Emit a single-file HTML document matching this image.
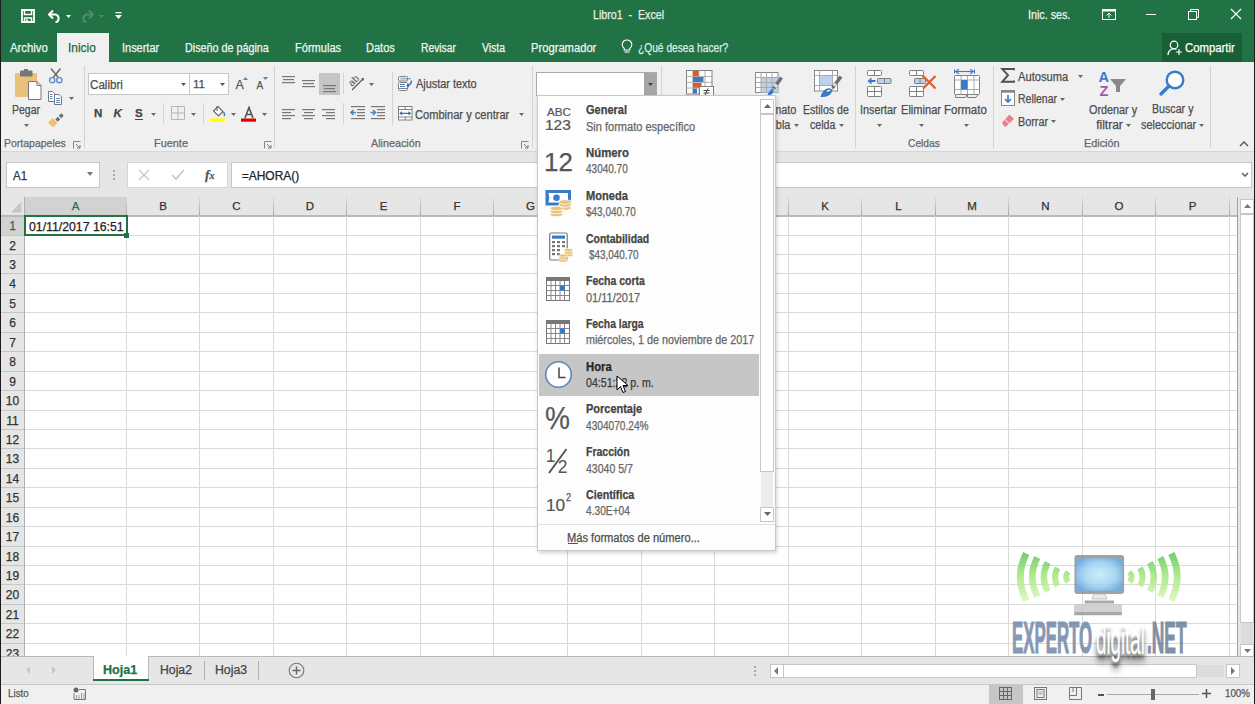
<!DOCTYPE html><html><head><meta charset="utf-8"><style>
*{margin:0;padding:0;box-sizing:border-box}
html,body{width:1255px;height:704px;overflow:hidden;position:relative;font-family:"Liberation Sans",sans-serif}
.r{position:absolute;display:block}
.t{position:absolute;white-space:nowrap;line-height:1;-webkit-text-stroke-width:0.25px}
</style></head><body>
<div class="r" style="left:0px;top:0px;width:1255px;height:704px;background:#e6e6e6;"></div>
<div class="r" style="left:0px;top:0px;width:1255px;height:62px;background:#217346;"></div>
<div class="r" style="left:0px;top:62px;width:1255px;height:90px;background:#f0f0f0;"></div>
<div class="r" style="left:0px;top:151px;width:1255px;height:1px;background:#d6d6d6;"></div>
<svg class="r" style="left:21px;top:9px;" width="14" height="14" viewBox="0 0 14 14"><path d="M1 1H13V13H1Z" fill="none" stroke="#fff" stroke-width="1.8"/><rect x="3.5" y="1" width="7" height="4.5" fill="none" stroke="#fff" stroke-width="1.5"/><rect x="3.5" y="9" width="7" height="4" fill="none" stroke="#fff" stroke-width="1.5"/><rect x="5" y="10.5" width="2" height="2.5" fill="#fff"/></svg>
<svg class="r" style="left:47px;top:9px;" width="15" height="14" viewBox="0 0 15 14"><path d="M2.5 5.5H8.5A4 4 0 0 1 8.5 13.3" fill="none" stroke="#fff" stroke-width="2"/><path d="M6 1.5L2 5.5L6 9.5" fill="none" stroke="#fff" stroke-width="2"/></svg>
<svg class="r" style="left:66px;top:15px;" width="5" height="3" viewBox="0 0 5 3"><path d="M0 0H5L2.5 3Z" fill="#fff"/></svg>
<svg class="r" style="left:80px;top:9px;" width="15" height="14" viewBox="0 0 15 14"><path d="M12.5 5.5H6.5A4 4 0 0 0 6.5 13.3" fill="none" stroke="#4e8d67" stroke-width="2"/><path d="M9 1.5L13 5.5L9 9.5" fill="none" stroke="#4e8d67" stroke-width="2"/></svg>
<svg class="r" style="left:99px;top:15px;" width="5" height="3" viewBox="0 0 5 3"><path d="M0 0H5L2.5 3Z" fill="#4e8d67"/></svg>
<svg class="r" style="left:115px;top:11px;" width="7" height="9" viewBox="0 0 7 9"><rect x="0.5" y="1" width="6" height="1.3" fill="#fff"/><path d="M0 4H7L3.5 8Z" fill="#fff"/></svg>
<div class="t" style="left:592.65px;top:8.84px;font-size:12px;color:#e8f0ea;font-weight:400;transform:scaleX(0.888);transform-origin:0 0;">Libro1&nbsp; -&nbsp; Excel</div>
<div class="t" style="left:1028.34px;top:8.84px;font-size:12px;color:#eef4f0;font-weight:400;transform:scaleX(0.893);transform-origin:0 0;">Inic. ses.</div>
<svg class="r" style="left:1102px;top:9px;" width="14" height="11" viewBox="0 0 14 11"><rect x="0.5" y="0.5" width="13" height="10" fill="none" stroke="#fff" stroke-width="1"/><rect x="0.5" y="0.5" width="13" height="2" fill="#fff"/><path d="M7 9V4M4.5 6.5L7 4L9.5 6.5" fill="none" stroke="#fff" stroke-width="1"/></svg>
<div class="r" style="left:1146px;top:14px;width:10px;height:1px;background:#fff;"></div>
<svg class="r" style="left:1188px;top:9px;" width="11" height="11" viewBox="0 0 11 11"><rect x="0.5" y="2.5" width="8" height="8" fill="none" stroke="#fff"/><path d="M2.5 2.5V0.5H10.5V8.5H8.5" fill="none" stroke="#fff"/></svg>
<svg class="r" style="left:1230px;top:8px;" width="12" height="12" viewBox="0 0 12 12"><path d="M1 1L11 11M11 1L1 11" stroke="#fff" stroke-width="1.2"/></svg>
<div class="r" style="left:57px;top:33px;width:52px;height:29px;background:#f0f0f0;"></div>
<div class="t" style="left:9.60px;top:42.04px;font-size:12px;color:#f0f5f1;font-weight:400;transform:scaleX(0.946);transform-origin:0 0;">Archivo</div>
<div class="t" style="left:68.43px;top:42.04px;font-size:12px;color:#1d6a3f;font-weight:400;transform:scaleX(0.990);transform-origin:0 0;">Inicio</div>
<div class="t" style="left:121.51px;top:42.04px;font-size:12px;color:#f0f5f1;font-weight:400;transform:scaleX(0.913);transform-origin:0 0;">Insertar</div>
<div class="t" style="left:184.64px;top:42.04px;font-size:12px;color:#f0f5f1;font-weight:400;transform:scaleX(0.897);transform-origin:0 0;">Diseño de página</div>
<div class="t" style="left:294.52px;top:42.04px;font-size:12px;color:#f0f5f1;font-weight:400;transform:scaleX(0.921);transform-origin:0 0;">Fórmulas</div>
<div class="t" style="left:366.22px;top:42.04px;font-size:12px;color:#f0f5f1;font-weight:400;transform:scaleX(0.919);transform-origin:0 0;">Datos</div>
<div class="t" style="left:420.68px;top:42.04px;font-size:12px;color:#f0f5f1;font-weight:400;transform:scaleX(0.857);transform-origin:0 0;">Revisar</div>
<div class="t" style="left:482.00px;top:42.04px;font-size:12px;color:#f0f5f1;font-weight:400;transform:scaleX(0.867);transform-origin:0 0;">Vista</div>
<div class="t" style="left:531.00px;top:42.04px;font-size:12px;color:#f0f5f1;font-weight:400;transform:scaleX(0.933);transform-origin:0 0;">Programador</div>
<svg class="r" style="left:621px;top:39px;" width="12" height="15" viewBox="0 0 12 15"><path d="M6 1A4.5 4.5 0 0 0 3.2 9.2V11H8.8V9.2A4.5 4.5 0 0 0 6 1Z" fill="none" stroke="#fff" stroke-width="1.1"/><path d="M3.5 13H8.5" stroke="#fff" stroke-width="1.1"/></svg>
<div class="t" style="left:637.79px;top:41.84px;font-size:12px;color:#dfeae3;font-weight:400;transform:scaleX(0.851);transform-origin:0 0;">¿Qué desea hacer?</div>
<div class="r" style="left:1162px;top:33px;width:80px;height:29px;background:#185f35;"></div>
<svg class="r" style="left:1167px;top:40px;" width="16" height="16" viewBox="0 0 16 16"><circle cx="7" cy="5" r="3.8" fill="none" stroke="#fff" stroke-width="1.2"/><path d="M1 15A6 6 0 0 1 9.5 9.3" fill="none" stroke="#fff" stroke-width="1.2"/><path d="M12 9V15M9 12H15" stroke="#fff" stroke-width="1.2"/></svg>
<div class="t" style="left:1185.33px;top:42.04px;font-size:12px;color:#ffffff;font-weight:400;transform:scaleX(0.946);transform-origin:0 0;">Compartir</div>
<svg class="r" style="left:14px;top:69px;" width="29" height="32" viewBox="0 0 29 32"><rect x="1" y="4" width="22" height="24" rx="1" fill="#e8c17a"/><rect x="6" y="1.5" width="12.5" height="6" rx="1" fill="#777"/><rect x="10" y="0" width="4" height="3" fill="#777"/><path d="M14.5 12.5H23L27 16.5V30.5H14.5Z" fill="#fff" stroke="#777" stroke-width="1"/><path d="M23 12.5V16.5H27" fill="none" stroke="#777" stroke-width="1"/></svg>
<div class="t" style="left:12.16px;top:103.84px;font-size:12px;color:#4d4d4d;font-weight:400;transform:scaleX(0.874);transform-origin:0 0;">Pegar</div>
<svg class="r" style="left:24px;top:124px;" width="5" height="3" viewBox="0 0 5 3"><path d="M0 0H5L2.5 3Z" fill="#666"/></svg>
<svg class="r" style="left:48px;top:67px;" width="16" height="17" viewBox="0 0 16 17"><path d="M3 1.5L10.3 10.5M12.5 1.5L5.2 10.5" stroke="#6a6a6a" stroke-width="1.5"/><circle cx="4.2" cy="13.2" r="2.6" fill="none" stroke="#5a8cc8" stroke-width="1.4"/><circle cx="11.3" cy="13.2" r="2.6" fill="none" stroke="#5a8cc8" stroke-width="1.4"/></svg>
<svg class="r" style="left:47px;top:90px;" width="16" height="16" viewBox="0 0 16 16"><path d="M1.5 1.5H5.5L7.5 3.5V11.5H1.5Z" fill="#fff" stroke="#777"/><path d="M3 4.5H5.5M3 6.5H5.5M3 8.5H5.5" stroke="#5b8ac6"/><path d="M7.5 4.5H12L14.5 7V14.5H7.5Z" fill="#fff" stroke="#777"/><path d="M9 8.5H13M9 10.5H13M9 12.5H13" stroke="#5b8ac6"/></svg>
<svg class="r" style="left:69px;top:97px;" width="5" height="3" viewBox="0 0 5 3"><path d="M0 0H5L2.5 3Z" fill="#666"/></svg>
<svg class="r" style="left:47px;top:112px;" width="17" height="16" viewBox="0 0 17 16"><path d="M15.5 2.5L13 5M12 6L9.5 8.5" stroke="#6d6d6d" stroke-width="3.4"/><path d="M1 10.5L5.5 6L10.5 11L6 15.5Z" fill="#e8c17a"/></svg>
<div class="t" style="left:3.56px;top:137.77px;font-size:11.5px;color:#666;font-weight:400;transform:scaleX(0.912);transform-origin:0 0;">Portapapeles</div>
<svg class="r" style="left:72.5px;top:140.5px;" width="8" height="8" viewBox="0 0 8 8"><path d="M0.5 7.5V0.5H7.5" fill="none" stroke="#888"/><path d="M3 3L7 7M4 7H7V4" fill="none" stroke="#777"/></svg>
<div class="r" style="left:84px;top:66px;width:1px;height:82px;background:#d4d4d4;"></div>
<div class="r" style="left:88px;top:73px;width:102px;height:22px;background:#ffffff;border:1px solid #c6c6c6"></div>
<div class="t" style="left:89.92px;top:78.84px;font-size:12px;color:#4d4d4d;font-weight:400;transform:scaleX(0.967);transform-origin:0 0;">Calibri</div>
<svg class="r" style="left:181px;top:83px;" width="5" height="3" viewBox="0 0 5 3"><path d="M0 0H5L2.5 3Z" fill="#555"/></svg>
<div class="r" style="left:189px;top:73px;width:40px;height:22px;background:#ffffff;border:1px solid #c6c6c6"></div>
<div class="t" style="left:193.00px;top:78.77px;font-size:11.5px;color:#4d4d4d;font-weight:400;">11</div>
<svg class="r" style="left:220px;top:83px;" width="5" height="3" viewBox="0 0 5 3"><path d="M0 0H5L2.5 3Z" fill="#555"/></svg>
<div class="t" style="left:235.50px;top:78.92px;font-size:12.5px;color:#555;font-weight:400;">A</div>
<svg class="r" style="left:243px;top:77px;" width="5" height="3" viewBox="0 0 5 3"><path d="M0 3H5L2.5 0Z" fill="#4a86c6"/></svg>
<div class="t" style="left:256.50px;top:81.03px;font-size:10px;color:#555;font-weight:400;">A</div>
<svg class="r" style="left:263px;top:77px;" width="5" height="3" viewBox="0 0 5 3"><path d="M0 0H5L2.5 3Z" fill="#4a86c6"/></svg>
<div class="t" style="left:94.00px;top:107.77px;font-size:11.5px;color:#444;font-weight:700;">N</div>
<div class="t" style="left:113.50px;top:107.77px;font-size:11.5px;color:#444;font-weight:700;font-style:italic">K</div>
<div class="t" style="left:135.00px;top:107.77px;font-size:11.5px;color:#444;font-weight:700;">S</div>
<div class="r" style="left:135px;top:119px;width:8px;height:1.2px;background:#444;"></div>
<svg class="r" style="left:151px;top:113px;" width="5" height="3" viewBox="0 0 5 3"><path d="M0 0H5L2.5 3Z" fill="#666"/></svg>
<div class="r" style="left:163px;top:103px;width:1px;height:21px;background:#d4d4d4;"></div>
<svg class="r" style="left:171px;top:106px;" width="14" height="15" viewBox="0 0 14 15"><path d="M0.5 0.5H13.5V13.5H0.5ZM7 0.5V13.5M0.5 7H13.5" fill="none" stroke="#b5b5b5" stroke-width="1"/></svg>
<svg class="r" style="left:191px;top:113px;" width="5" height="3" viewBox="0 0 5 3"><path d="M0 0H5L2.5 3Z" fill="#666"/></svg>
<div class="r" style="left:203px;top:103px;width:1px;height:21px;background:#d4d4d4;"></div>
<svg class="r" style="left:210px;top:105px;" width="17" height="17" viewBox="0 0 17 17"><path d="M3.5 6L8 1.5L13 6.5L8.5 11Z" fill="#fff" stroke="#666" stroke-width="1.1"/><path d="M7 1V6" stroke="#666" stroke-width="1.1"/><path d="M13.5 7Q15.5 9.5 14 11" fill="#4a86c6" stroke="#4a86c6" stroke-width="1.5"/><rect x="0" y="13.5" width="15" height="3" fill="#ffff00"/></svg>
<svg class="r" style="left:230.5px;top:113px;" width="5" height="3" viewBox="0 0 5 3"><path d="M0 0H5L2.5 3Z" fill="#666"/></svg>
<svg class="r" style="left:241px;top:106px;" width="16" height="16" viewBox="0 0 16 16"><path d="M4 12L8 1.5L12 12M5.5 8.5H10.5" fill="none" stroke="#555" stroke-width="1.6"/><rect x="0" y="12.5" width="15" height="3.2" fill="#e00000"/></svg>
<svg class="r" style="left:261.5px;top:113px;" width="5" height="3" viewBox="0 0 5 3"><path d="M0 0H5L2.5 3Z" fill="#666"/></svg>
<div class="t" style="left:154.13px;top:137.77px;font-size:11.5px;color:#666;font-weight:400;transform:scaleX(0.948);transform-origin:0 0;">Fuente</div>
<svg class="r" style="left:264px;top:141px;" width="8" height="8" viewBox="0 0 8 8"><path d="M0.5 7.5V0.5H7.5" fill="none" stroke="#888"/><path d="M3 3L7 7M4 7H7V4" fill="none" stroke="#777"/></svg>
<div class="r" style="left:274px;top:66px;width:1px;height:82px;background:#d4d4d4;"></div>
<svg class="r" style="left:282px;top:75.5px;" width="14" height="9" viewBox="0 0 14 9"><rect x="0" y="0" width="13" height="1.2" fill="#777"/><rect x="1" y="3" width="11" height="1.2" fill="#777"/><rect x="0" y="6" width="13" height="1.2" fill="#777"/></svg>
<svg class="r" style="left:302px;top:79.5px;" width="14" height="9" viewBox="0 0 14 9"><rect x="0" y="0" width="13" height="1.2" fill="#777"/><rect x="1" y="3" width="11" height="1.2" fill="#777"/><rect x="0" y="6" width="13" height="1.2" fill="#777"/></svg>
<div class="r" style="left:318.5px;top:73px;width:21px;height:22px;background:#c5c5c5;"></div>
<svg class="r" style="left:322.5px;top:84.5px;" width="14" height="9" viewBox="0 0 14 9"><rect x="0" y="0" width="13" height="1.2" fill="#777"/><rect x="1" y="3" width="11" height="1.2" fill="#777"/><rect x="0" y="6" width="13" height="1.2" fill="#777"/></svg>
<div class="r" style="left:343px;top:73px;width:1px;height:21px;background:#d4d4d4;"></div>
<svg class="r" style="left:349px;top:75px;" width="18" height="16" viewBox="0 0 18 16"><text x="0" y="0" font-family="Liberation Sans" font-size="10" fill="#555" transform="translate(3,12) rotate(-45)">ab</text><path d="M3 15L14 4" stroke="#555" stroke-width="1.1"/><path d="M12 3.5L15 3L14.5 6Z" fill="#555"/></svg>
<svg class="r" style="left:369px;top:83px;" width="5" height="3" viewBox="0 0 5 3"><path d="M0 0H5L2.5 3Z" fill="#666"/></svg>
<svg class="r" style="left:282px;top:108.5px;" width="14" height="12" viewBox="0 0 14 12"><rect x="0" y="0" width="13" height="1.2" fill="#777"/><rect x="0" y="3" width="9" height="1.2" fill="#777"/><rect x="0" y="6" width="13" height="1.2" fill="#777"/><rect x="0" y="9" width="9" height="1.2" fill="#777"/></svg>
<svg class="r" style="left:302px;top:108.5px;" width="14" height="12" viewBox="0 0 14 12"><rect x="0" y="0" width="13" height="1.2" fill="#777"/><rect x="2" y="3" width="9" height="1.2" fill="#777"/><rect x="0" y="6" width="13" height="1.2" fill="#777"/><rect x="2" y="9" width="9" height="1.2" fill="#777"/></svg>
<svg class="r" style="left:322px;top:108.5px;" width="14" height="12" viewBox="0 0 14 12"><rect x="0" y="0" width="13" height="1.2" fill="#777"/><rect x="4" y="3" width="9" height="1.2" fill="#777"/><rect x="0" y="6" width="13" height="1.2" fill="#777"/><rect x="4" y="9" width="9" height="1.2" fill="#777"/></svg>
<div class="r" style="left:343px;top:103px;width:1px;height:21px;background:#d4d4d4;"></div>
<svg class="r" style="left:350px;top:106px;" width="16" height="14" viewBox="0 0 16 14"><rect x="1" y="0" width="14" height="1.2" fill="#777"/><rect x="7" y="3" width="8" height="1.2" fill="#777"/><rect x="7" y="6" width="8" height="1.2" fill="#777"/><rect x="7" y="9" width="8" height="1.2" fill="#777"/><rect x="1" y="12" width="14" height="1.2" fill="#777"/><path d="M1 6.5H6M3.5 4L1 6.5L3.5 9" fill="none" stroke="#4a86c6" stroke-width="1.6"/></svg>
<svg class="r" style="left:370px;top:106px;" width="16" height="14" viewBox="0 0 16 14"><rect x="1" y="0" width="14" height="1.2" fill="#777"/><rect x="7" y="3" width="8" height="1.2" fill="#777"/><rect x="7" y="6" width="8" height="1.2" fill="#777"/><rect x="7" y="9" width="8" height="1.2" fill="#777"/><rect x="1" y="12" width="14" height="1.2" fill="#777"/><path d="M0.5 6.5H5.5M3 4L5.5 6.5L3 9" fill="none" stroke="#4a86c6" stroke-width="1.6"/></svg>
<div class="r" style="left:391.5px;top:72px;width:1px;height:53px;background:#d4d4d4;"></div>
<svg class="r" style="left:397px;top:75px;" width="17" height="17" viewBox="0 0 17 17"><rect x="1.5" y="1.5" width="9" height="4.5" rx="1" fill="none" stroke="#808080"/><path d="M3.5 3.8H14" stroke="#6a8fc0" stroke-width="1"/><rect x="1.5" y="7.5" width="9" height="8" rx="1" fill="#fff" stroke="#808080"/><path d="M3 9.5H8M3 11.5H8" stroke="#4a7fc0"/><path d="M1.5 13.5H10.5" stroke="#808080"/><path d="M14.5 5.5Q14.5 9.5 10.5 10.5" fill="none" stroke="#3a6fb0" stroke-width="1.4"/><path d="M9 10.5L12 8.5V12.5Z" fill="#3a6fb0"/></svg>
<div class="t" style="left:416.30px;top:78.24px;font-size:12px;color:#4d4d4d;font-weight:400;transform:scaleX(0.908);transform-origin:0 0;">Ajustar texto</div>
<svg class="r" style="left:397px;top:105px;" width="16" height="16" viewBox="0 0 16 16"><rect x="1.5" y="1.5" width="13.5" height="13.5" fill="#fff" stroke="#808080"/><path d="M1.5 4.5H15M1.5 12H15M8.2 1.5V4.5M8.2 12V15" stroke="#808080"/><path d="M3.5 8.3H13M5 6.8L3.3 8.3L5 9.8M11.5 6.8L13.2 8.3L11.5 9.8" fill="none" stroke="#3a6fb0" stroke-width="1.2"/></svg>
<div class="t" style="left:415.45px;top:108.64px;font-size:12px;color:#4d4d4d;font-weight:400;transform:scaleX(0.924);transform-origin:0 0;">Combinar y centrar</div>
<svg class="r" style="left:518.5px;top:113px;" width="5" height="3" viewBox="0 0 5 3"><path d="M0 0H5L2.5 3Z" fill="#666"/></svg>
<div class="t" style="left:370.80px;top:137.77px;font-size:11.5px;color:#666;font-weight:400;transform:scaleX(0.935);transform-origin:0 0;">Alineación</div>
<svg class="r" style="left:521px;top:141px;" width="8" height="8" viewBox="0 0 8 8"><path d="M0.5 7.5V0.5H7.5" fill="none" stroke="#888"/><path d="M3 3L7 7M4 7H7V4" fill="none" stroke="#777"/></svg>
<div class="r" style="left:532px;top:66px;width:1px;height:82px;background:#d4d4d4;"></div>
<div class="r" style="left:661px;top:66px;width:1px;height:82px;background:#d4d4d4;"></div>
<svg class="r" style="left:686px;top:70px;" width="29" height="27" viewBox="0 0 29 27"><rect x="0.5" y="0.5" width="25.5" height="23.5" fill="#fff" stroke="#808080"/><path d="M6.8 0.5V24M12.9 0.5V24M19 0.5V24M0.5 6.5H26M0.5 12.4H26M0.5 18H26" stroke="#aaa" stroke-width="0.9"/><rect x="7" y="0.8" width="5.7" height="5.5" fill="#e05a2b"/><rect x="7" y="7" width="10.5" height="5" fill="#3a7bc8"/><rect x="7" y="13" width="8.5" height="4.7" fill="#e05a2b"/><rect x="7" y="18.5" width="4" height="5" fill="#3a7bc8"/><rect x="13.5" y="16.5" width="14" height="11" fill="#fff" stroke="#808080"/><path d="M17.5 20.5H23.5M17.5 23H23.5M22 18.5L19 25" stroke="#444" stroke-width="1"/></svg>
<svg class="r" style="left:754px;top:71px;" width="30" height="28" viewBox="0 0 30 28"><rect x="1.5" y="1.5" width="22.5" height="20" fill="#fff" stroke="#888"/><rect x="7" y="6.5" width="17" height="15" fill="#bcd2ec"/><path d="M7 1.5V21.5M12.5 1.5V21.5M18 1.5V21.5M1.5 6.5H24M1.5 11.5H24M1.5 16.5H24" stroke="#aaa" stroke-width="1"/><path d="M27.5 6.5L19.5 17.5" stroke="#707070" stroke-width="3.6"/><path d="M20.8 15.8L22.6 13.4" stroke="#ddd" stroke-width="3.6"/><path d="M13 25Q15 19 19 17.5Q20.5 20 18 23Q16 25 13 25Z" fill="#3a7bc8"/></svg>
<div class="t" style="left:739.43px;top:103.54px;font-size:12px;color:#4d4d4d;font-weight:400;transform:scaleX(0.904);transform-origin:0 0;">Dar formato</div>
<div class="t" style="left:737.06px;top:118.84px;font-size:12px;color:#4d4d4d;font-weight:400;transform:scaleX(0.910);transform-origin:0 0;">como tabla</div>
<svg class="r" style="left:793.5px;top:124px;" width="5" height="3" viewBox="0 0 5 3"><path d="M0 0H5L2.5 3Z" fill="#666"/></svg>
<svg class="r" style="left:813px;top:69px;" width="30" height="30" viewBox="0 0 30 30"><rect x="1.5" y="1.5" width="23" height="20.5" fill="#fff" stroke="#888"/><rect x="6.5" y="6.5" width="13" height="10" fill="#bcd2ec"/><path d="M6.5 1.5V22M19.5 1.5V22M1.5 6.5H24.5M1.5 16.5H24.5" stroke="#aaa" stroke-width="1"/><path d="M28 7.5L19.5 19" stroke="#707070" stroke-width="3.6"/><path d="M21 17L22.8 14.6" stroke="#ddd" stroke-width="3.6"/><path d="M7.5 28Q9 21.5 14 19.5Q17 18.5 19 20.5Q19.5 24 15.5 26.5Q12 28.5 7.5 28Z" fill="#3a7bc8"/><path d="M14 22.5Q15.5 21 17 21.5" stroke="#fff" stroke-width="1.2" fill="none"/></svg>
<div class="t" style="left:802.66px;top:104.04px;font-size:12px;color:#4d4d4d;font-weight:400;transform:scaleX(0.880);transform-origin:0 0;">Estilos de</div>
<div class="t" style="left:809.58px;top:119.14px;font-size:12px;color:#4d4d4d;font-weight:400;transform:scaleX(0.885);transform-origin:0 0;">celda</div>
<svg class="r" style="left:838.5px;top:124px;" width="5" height="3" viewBox="0 0 5 3"><path d="M0 0H5L2.5 3Z" fill="#666"/></svg>
<div class="r" style="left:855px;top:66px;width:1px;height:82px;background:#d4d4d4;"></div>
<svg class="r" style="left:866px;top:69px;" width="27" height="29" viewBox="0 0 27 29"><rect x="1.5" y="1.5" width="14" height="5" rx="0.8" fill="#fff" stroke="#808080"/><path d="M8.5 1.5V6.5" stroke="#808080"/><rect x="11.5" y="9.5" width="13.5" height="5" rx="0.8" fill="#bcd2ec" stroke="#808080"/><path d="M18.5 9.5V14.5" stroke="#808080"/><path d="M9.5 12H4" stroke="#3a7bc8" stroke-width="2"/><path d="M1.5 12L5.5 8.5V15.5Z" fill="#3a7bc8"/><rect x="1.5" y="17.5" width="14" height="10" rx="0.8" fill="#fff" stroke="#808080"/><path d="M8.5 17.5V27.5M1.5 22.5H15.5" stroke="#808080"/></svg>
<div class="t" style="left:860.03px;top:103.54px;font-size:12px;color:#4d4d4d;font-weight:400;transform:scaleX(0.901);transform-origin:0 0;">Insertar</div>
<svg class="r" style="left:876.5px;top:123.5px;" width="5" height="3" viewBox="0 0 5 3"><path d="M0 0H5L2.5 3Z" fill="#666"/></svg>
<svg class="r" style="left:908px;top:69px;" width="29" height="29" viewBox="0 0 29 29"><rect x="1.5" y="1.5" width="14" height="5" rx="0.8" fill="#fff" stroke="#808080"/><path d="M8.5 1.5V6.5" stroke="#808080"/><rect x="6.5" y="9.5" width="11" height="5" rx="0.8" fill="#bcd2ec" stroke="#808080"/><path d="M12 9.5V14.5" stroke="#808080"/><rect x="1.5" y="17.5" width="14" height="10" rx="0.8" fill="#fff" stroke="#808080"/><path d="M8.5 17.5V27.5M1.5 22.5H15.5" stroke="#808080"/><path d="M14.5 6.5L27.5 19.5M27.5 7L15 19.5" stroke="#e05a2b" stroke-width="2.2"/></svg>
<div class="t" style="left:900.71px;top:103.54px;font-size:12px;color:#4d4d4d;font-weight:400;transform:scaleX(0.923);transform-origin:0 0;">Eliminar</div>
<svg class="r" style="left:918.5px;top:123.5px;" width="5" height="3" viewBox="0 0 5 3"><path d="M0 0H5L2.5 3Z" fill="#666"/></svg>
<svg class="r" style="left:953px;top:69px;" width="28" height="31" viewBox="0 0 28 31"><path d="M1.5 0.5V4.5M21.5 0.5V4.5" stroke="#3a7bc8"/><path d="M2.5 2.5H20.5" stroke="#3a7bc8" stroke-width="1.1"/><path d="M6 0.3L2.5 2.5L6 4.7M17 0.3L20.5 2.5L17 4.7" fill="none" stroke="#3a7bc8" stroke-width="1.1"/><rect x="1.5" y="6.5" width="25" height="19" rx="0.8" fill="#fff" stroke="#808080"/><path d="M8 6.5V25.5M14.5 6.5V25.5M21 6.5V25.5M1.5 11H26.5M1.5 20.5H26.5" stroke="#aaa"/><rect x="8" y="11" width="6.5" height="9.5" fill="#3a7bc8"/><path d="M2.5 25.5V28.5H12.5L14 25.5M14.5 25.5V28.5H23L25 25.5" fill="none" stroke="#808080"/></svg>
<div class="t" style="left:944.48px;top:103.54px;font-size:12px;color:#4d4d4d;font-weight:400;transform:scaleX(0.958);transform-origin:0 0;">Formato</div>
<svg class="r" style="left:963.5px;top:123.5px;" width="5" height="3" viewBox="0 0 5 3"><path d="M0 0H5L2.5 3Z" fill="#666"/></svg>
<div class="t" style="left:908.19px;top:137.87px;font-size:11.5px;color:#666;font-weight:400;transform:scaleX(0.890);transform-origin:0 0;">Celdas</div>
<div class="r" style="left:993px;top:66px;width:1px;height:82px;background:#d4d4d4;"></div>
<svg class="r" style="left:1000px;top:67px;" width="16" height="17" viewBox="0 0 16 17"><path d="M14 3.2V2H2.2L8 8.2L2.2 14.8H14V13.5" fill="none" stroke="#505050" stroke-width="1.9" stroke-linejoin="miter"/></svg>
<div class="t" style="left:1018.20px;top:70.84px;font-size:12px;color:#4d4d4d;font-weight:400;transform:scaleX(0.929);transform-origin:0 0;">Autosuma</div>
<svg class="r" style="left:1078px;top:75px;" width="5" height="3" viewBox="0 0 5 3"><path d="M0 0H5L2.5 3Z" fill="#666"/></svg>
<svg class="r" style="left:1001px;top:90px;" width="15" height="17" viewBox="0 0 15 17"><rect x="0.5" y="0.5" width="13" height="15" fill="#fff" stroke="#888"/><rect x="0.5" y="0.5" width="13" height="2.2" fill="#888"/><path d="M7 5V12M4 9L7 12L10 9" fill="none" stroke="#3a7bc8" stroke-width="1.7"/></svg>
<div class="t" style="left:1017.66px;top:92.84px;font-size:12px;color:#4d4d4d;font-weight:400;transform:scaleX(0.872);transform-origin:0 0;">Rellenar</div>
<svg class="r" style="left:1059.5px;top:98px;" width="5" height="3" viewBox="0 0 5 3"><path d="M0 0H5L2.5 3Z" fill="#666"/></svg>
<svg class="r" style="left:1001px;top:113px;" width="14" height="14" viewBox="0 0 14 14"><path d="M1 9.5L8.5 1.5L13 6L5 13.5Q3.5 14 2.5 12.5Z" fill="#e8808f"/><path d="M4 6.5L8.5 11" stroke="#fff" stroke-width="1"/></svg>
<div class="t" style="left:1017.64px;top:115.54px;font-size:12px;color:#4d4d4d;font-weight:400;transform:scaleX(0.900);transform-origin:0 0;">Borrar</div>
<svg class="r" style="left:1050.5px;top:120px;" width="5" height="3" viewBox="0 0 5 3"><path d="M0 0H5L2.5 3Z" fill="#666"/></svg>
<svg class="r" style="left:1098px;top:70px;" width="30" height="27" viewBox="0 0 30 27"><text x="0.5" y="12" font-family="Liberation Sans" font-weight="700" font-size="14.5" fill="#3a7bc8">A</text><text x="1.5" y="26" font-family="Liberation Sans" font-weight="700" font-size="14.5" fill="#9b59b6">Z</text><path d="M12 9H28L22 16V22H18V16Z" fill="#888"/></svg>
<div class="t" style="left:1088.71px;top:103.64px;font-size:12px;color:#4d4d4d;font-weight:400;transform:scaleX(0.902);transform-origin:0 0;">Ordenar y</div>
<div class="t" style="left:1096.18px;top:118.84px;font-size:12px;color:#4d4d4d;font-weight:400;">filtrar</div>
<svg class="r" style="left:1125.5px;top:124px;" width="5" height="3" viewBox="0 0 5 3"><path d="M0 0H5L2.5 3Z" fill="#666"/></svg>
<svg class="r" style="left:1159px;top:70px;" width="27" height="27" viewBox="0 0 27 27"><circle cx="16" cy="10" r="8.3" fill="#fff" stroke="#3a7bc8" stroke-width="2.4"/><path d="M10 16L2 24" stroke="#3a7bc8" stroke-width="3.3" stroke-linecap="round"/></svg>
<div class="t" style="left:1151.55px;top:103.34px;font-size:12px;color:#4d4d4d;font-weight:400;transform:scaleX(0.888);transform-origin:0 0;">Buscar y</div>
<div class="t" style="left:1140.73px;top:118.84px;font-size:12px;color:#4d4d4d;font-weight:400;transform:scaleX(0.910);transform-origin:0 0;">seleccionar</div>
<svg class="r" style="left:1198.5px;top:124px;" width="5" height="3" viewBox="0 0 5 3"><path d="M0 0H5L2.5 3Z" fill="#666"/></svg>
<div class="t" style="left:1084.13px;top:137.77px;font-size:11.5px;color:#666;font-weight:400;transform:scaleX(0.942);transform-origin:0 0;">Edición</div>
<div class="r" style="left:1209.5px;top:66px;width:1px;height:82px;background:#d4d4d4;"></div>
<svg class="r" style="left:1239px;top:141px;" width="10" height="6" viewBox="0 0 10 6"><path d="M1 5L5 1L9 5" fill="none" stroke="#555" stroke-width="1.4"/></svg>
<div class="r" style="left:6px;top:162px;width:94px;height:26px;background:#ffffff;border:1px solid #c6c6c6"></div>
<div class="t" style="left:13.00px;top:170.14px;font-size:12px;color:#333;font-weight:400;transform:scaleX(0.957);transform-origin:0 0;">A1</div>
<svg class="r" style="left:87px;top:172px;" width="6" height="4" viewBox="0 0 6 4"><path d="M0 0H6L3.0 4Z" fill="#777"/></svg>
<div class="r" style="left:113px;top:170px;width:1.5px;height:1.5px;background:#aaa;"></div>
<div class="r" style="left:113px;top:174px;width:1.5px;height:1.5px;background:#aaa;"></div>
<div class="r" style="left:113px;top:178px;width:1.5px;height:1.5px;background:#aaa;"></div>
<div class="r" style="left:127px;top:162px;width:101px;height:26px;background:#ffffff;border:1px solid #d6d6d6"></div>
<svg class="r" style="left:138px;top:169px;" width="12" height="12" viewBox="0 0 12 12"><path d="M1 1L11 11M11 1L1 11" stroke="#c4c4c4" stroke-width="1.3"/></svg>
<svg class="r" style="left:171px;top:169px;" width="14" height="12" viewBox="0 0 14 12"><path d="M1 6L5 10L13 1" fill="none" stroke="#c4c4c4" stroke-width="1.6"/></svg>
<div class="t" style="left:205.00px;top:168.07px;font-size:13.5px;color:#555;font-weight:700;font-family:Liberation Serif"><i>f</i><i style="font-size:10px">x</i></div>
<div class="r" style="left:231px;top:162px;width:1021px;height:26px;background:#ffffff;border:1px solid #c6c6c6"></div>
<div class="t" style="left:241.66px;top:170.14px;font-size:12px;color:#222;font-weight:400;">=AHORA()</div>
<svg class="r" style="left:1241px;top:172px;" width="8" height="5" viewBox="0 0 8 5"><path d="M1 1L4 4L7 1" fill="none" stroke="#666" stroke-width="1.6"/></svg>
<div class="r" style="left:1px;top:197px;width:1237px;height:19px;background:#e6e6e6;"></div>
<div class="r" style="left:1px;top:215px;width:24px;height:442px;background:#e6e6e6;"></div>
<div class="r" style="left:25px;top:216px;width:1212px;height:441px;background:#ffffff;"></div>
<div class="r" style="left:25px;top:197px;width:101px;height:18px;background:#d2d2d2;"></div>
<div class="r" style="left:1px;top:216px;width:23px;height:19px;background:#d2d2d2;"></div>
<div class="r" style="left:126px;top:197px;width:1px;height:18px;background:linear-gradient(#dcdcdc,#a9a9a9);"></div>
<div class="r" style="left:199px;top:197px;width:1px;height:18px;background:linear-gradient(#dcdcdc,#a9a9a9);"></div>
<div class="r" style="left:273px;top:197px;width:1px;height:18px;background:linear-gradient(#dcdcdc,#a9a9a9);"></div>
<div class="r" style="left:346px;top:197px;width:1px;height:18px;background:linear-gradient(#dcdcdc,#a9a9a9);"></div>
<div class="r" style="left:420px;top:197px;width:1px;height:18px;background:linear-gradient(#dcdcdc,#a9a9a9);"></div>
<div class="r" style="left:493px;top:197px;width:1px;height:18px;background:linear-gradient(#dcdcdc,#a9a9a9);"></div>
<div class="r" style="left:567px;top:197px;width:1px;height:18px;background:linear-gradient(#dcdcdc,#a9a9a9);"></div>
<div class="r" style="left:641px;top:197px;width:1px;height:18px;background:linear-gradient(#dcdcdc,#a9a9a9);"></div>
<div class="r" style="left:714px;top:197px;width:1px;height:18px;background:linear-gradient(#dcdcdc,#a9a9a9);"></div>
<div class="r" style="left:788px;top:197px;width:1px;height:18px;background:linear-gradient(#dcdcdc,#a9a9a9);"></div>
<div class="r" style="left:861px;top:197px;width:1px;height:18px;background:linear-gradient(#dcdcdc,#a9a9a9);"></div>
<div class="r" style="left:935px;top:197px;width:1px;height:18px;background:linear-gradient(#dcdcdc,#a9a9a9);"></div>
<div class="r" style="left:1008px;top:197px;width:1px;height:18px;background:linear-gradient(#dcdcdc,#a9a9a9);"></div>
<div class="r" style="left:1082px;top:197px;width:1px;height:18px;background:linear-gradient(#dcdcdc,#a9a9a9);"></div>
<div class="r" style="left:1155px;top:197px;width:1px;height:18px;background:linear-gradient(#dcdcdc,#a9a9a9);"></div>
<div class="r" style="left:1229px;top:197px;width:1px;height:18px;background:linear-gradient(#dcdcdc,#a9a9a9);"></div>
<div class="r" style="left:1px;top:215px;width:1237px;height:2px;background:#b9b9b9;"></div>
<div class="r" style="left:24px;top:197px;width:1px;height:460px;background:#b0b0b0;"></div>
<svg class="r" style="left:11px;top:201px;" width="11" height="12" viewBox="0 0 11 12"><path d="M10.5 0.5V11.5H0Z" fill="#c6c6c6"/></svg>
<div class="r" style="left:126px;top:216px;width:1px;height:441px;background:#dadada;"></div>
<div class="r" style="left:199px;top:216px;width:1px;height:441px;background:#dadada;"></div>
<div class="r" style="left:273px;top:216px;width:1px;height:441px;background:#dadada;"></div>
<div class="r" style="left:346px;top:216px;width:1px;height:441px;background:#dadada;"></div>
<div class="r" style="left:420px;top:216px;width:1px;height:441px;background:#dadada;"></div>
<div class="r" style="left:493px;top:216px;width:1px;height:441px;background:#dadada;"></div>
<div class="r" style="left:567px;top:216px;width:1px;height:441px;background:#dadada;"></div>
<div class="r" style="left:641px;top:216px;width:1px;height:441px;background:#dadada;"></div>
<div class="r" style="left:714px;top:216px;width:1px;height:441px;background:#dadada;"></div>
<div class="r" style="left:788px;top:216px;width:1px;height:441px;background:#dadada;"></div>
<div class="r" style="left:861px;top:216px;width:1px;height:441px;background:#dadada;"></div>
<div class="r" style="left:935px;top:216px;width:1px;height:441px;background:#dadada;"></div>
<div class="r" style="left:1008px;top:216px;width:1px;height:441px;background:#dadada;"></div>
<div class="r" style="left:1082px;top:216px;width:1px;height:441px;background:#dadada;"></div>
<div class="r" style="left:1155px;top:216px;width:1px;height:441px;background:#dadada;"></div>
<div class="r" style="left:1229px;top:216px;width:1px;height:441px;background:#dadada;"></div>
<div class="r" style="left:25px;top:235px;width:1212px;height:1px;background:#dadada;"></div>
<div class="r" style="left:25px;top:254px;width:1212px;height:1px;background:#dadada;"></div>
<div class="r" style="left:25px;top:273px;width:1212px;height:1px;background:#dadada;"></div>
<div class="r" style="left:25px;top:293px;width:1212px;height:1px;background:#dadada;"></div>
<div class="r" style="left:25px;top:312px;width:1212px;height:1px;background:#dadada;"></div>
<div class="r" style="left:25px;top:332px;width:1212px;height:1px;background:#dadada;"></div>
<div class="r" style="left:25px;top:351px;width:1212px;height:1px;background:#dadada;"></div>
<div class="r" style="left:25px;top:371px;width:1212px;height:1px;background:#dadada;"></div>
<div class="r" style="left:25px;top:390px;width:1212px;height:1px;background:#dadada;"></div>
<div class="r" style="left:25px;top:410px;width:1212px;height:1px;background:#dadada;"></div>
<div class="r" style="left:25px;top:429px;width:1212px;height:1px;background:#dadada;"></div>
<div class="r" style="left:25px;top:448px;width:1212px;height:1px;background:#dadada;"></div>
<div class="r" style="left:25px;top:468px;width:1212px;height:1px;background:#dadada;"></div>
<div class="r" style="left:25px;top:487px;width:1212px;height:1px;background:#dadada;"></div>
<div class="r" style="left:25px;top:507px;width:1212px;height:1px;background:#dadada;"></div>
<div class="r" style="left:25px;top:526px;width:1212px;height:1px;background:#dadada;"></div>
<div class="r" style="left:25px;top:546px;width:1212px;height:1px;background:#dadada;"></div>
<div class="r" style="left:25px;top:565px;width:1212px;height:1px;background:#dadada;"></div>
<div class="r" style="left:25px;top:584px;width:1212px;height:1px;background:#dadada;"></div>
<div class="r" style="left:25px;top:604px;width:1212px;height:1px;background:#dadada;"></div>
<div class="r" style="left:25px;top:623px;width:1212px;height:1px;background:#dadada;"></div>
<div class="r" style="left:25px;top:643px;width:1212px;height:1px;background:#dadada;"></div>
<div class="r" style="left:1px;top:235px;width:23px;height:1px;background:#c6c6c6;"></div>
<div class="r" style="left:1px;top:254px;width:23px;height:1px;background:#c6c6c6;"></div>
<div class="r" style="left:1px;top:273px;width:23px;height:1px;background:#c6c6c6;"></div>
<div class="r" style="left:1px;top:293px;width:23px;height:1px;background:#c6c6c6;"></div>
<div class="r" style="left:1px;top:312px;width:23px;height:1px;background:#c6c6c6;"></div>
<div class="r" style="left:1px;top:332px;width:23px;height:1px;background:#c6c6c6;"></div>
<div class="r" style="left:1px;top:351px;width:23px;height:1px;background:#c6c6c6;"></div>
<div class="r" style="left:1px;top:371px;width:23px;height:1px;background:#c6c6c6;"></div>
<div class="r" style="left:1px;top:390px;width:23px;height:1px;background:#c6c6c6;"></div>
<div class="r" style="left:1px;top:410px;width:23px;height:1px;background:#c6c6c6;"></div>
<div class="r" style="left:1px;top:429px;width:23px;height:1px;background:#c6c6c6;"></div>
<div class="r" style="left:1px;top:448px;width:23px;height:1px;background:#c6c6c6;"></div>
<div class="r" style="left:1px;top:468px;width:23px;height:1px;background:#c6c6c6;"></div>
<div class="r" style="left:1px;top:487px;width:23px;height:1px;background:#c6c6c6;"></div>
<div class="r" style="left:1px;top:507px;width:23px;height:1px;background:#c6c6c6;"></div>
<div class="r" style="left:1px;top:526px;width:23px;height:1px;background:#c6c6c6;"></div>
<div class="r" style="left:1px;top:546px;width:23px;height:1px;background:#c6c6c6;"></div>
<div class="r" style="left:1px;top:565px;width:23px;height:1px;background:#c6c6c6;"></div>
<div class="r" style="left:1px;top:584px;width:23px;height:1px;background:#c6c6c6;"></div>
<div class="r" style="left:1px;top:604px;width:23px;height:1px;background:#c6c6c6;"></div>
<div class="r" style="left:1px;top:623px;width:23px;height:1px;background:#c6c6c6;"></div>
<div class="r" style="left:1px;top:643px;width:23px;height:1px;background:#c6c6c6;"></div>
<div class="r" style="left:1237px;top:197px;width:1px;height:460px;background:#a0a0a0;"></div>
<div class="t" style="left:45.5px;width:60px;text-align:center;top:200.77px;font-size:11.5px;color:#217346;font-weight:400;">A</div>
<div class="t" style="left:133.0px;width:60px;text-align:center;top:200.77px;font-size:11.5px;color:#333;font-weight:400;">B</div>
<div class="t" style="left:206.5px;width:60px;text-align:center;top:200.77px;font-size:11.5px;color:#333;font-weight:400;">C</div>
<div class="t" style="left:280.0px;width:60px;text-align:center;top:200.77px;font-size:11.5px;color:#333;font-weight:400;">D</div>
<div class="t" style="left:353.5px;width:60px;text-align:center;top:200.77px;font-size:11.5px;color:#333;font-weight:400;">E</div>
<div class="t" style="left:427.0px;width:60px;text-align:center;top:200.77px;font-size:11.5px;color:#333;font-weight:400;">F</div>
<div class="t" style="left:500.5px;width:60px;text-align:center;top:200.77px;font-size:11.5px;color:#333;font-weight:400;">G</div>
<div class="t" style="left:574.5px;width:60px;text-align:center;top:200.77px;font-size:11.5px;color:#333;font-weight:400;">H</div>
<div class="t" style="left:648.0px;width:60px;text-align:center;top:200.77px;font-size:11.5px;color:#333;font-weight:400;">I</div>
<div class="t" style="left:721.5px;width:60px;text-align:center;top:200.77px;font-size:11.5px;color:#333;font-weight:400;">J</div>
<div class="t" style="left:795.0px;width:60px;text-align:center;top:200.77px;font-size:11.5px;color:#333;font-weight:400;">K</div>
<div class="t" style="left:868.5px;width:60px;text-align:center;top:200.77px;font-size:11.5px;color:#333;font-weight:400;">L</div>
<div class="t" style="left:942.0px;width:60px;text-align:center;top:200.77px;font-size:11.5px;color:#333;font-weight:400;">M</div>
<div class="t" style="left:1015.5px;width:60px;text-align:center;top:200.77px;font-size:11.5px;color:#333;font-weight:400;">N</div>
<div class="t" style="left:1089.0px;width:60px;text-align:center;top:200.77px;font-size:11.5px;color:#333;font-weight:400;">O</div>
<div class="t" style="left:1162.5px;width:60px;text-align:center;top:200.77px;font-size:11.5px;color:#333;font-weight:400;">P</div>
<div class="t" style="left:0.5px;width:24px;text-align:center;top:220.34px;font-size:12px;color:#217346;font-weight:400;">1</div>
<div class="t" style="left:0.5px;width:24px;text-align:center;top:240.34px;font-size:12px;color:#333;font-weight:400;">2</div>
<div class="t" style="left:0.5px;width:24px;text-align:center;top:259.34px;font-size:12px;color:#333;font-weight:400;">3</div>
<div class="t" style="left:0.5px;width:24px;text-align:center;top:278.34px;font-size:12px;color:#333;font-weight:400;">4</div>
<div class="t" style="left:0.5px;width:24px;text-align:center;top:298.34px;font-size:12px;color:#333;font-weight:400;">5</div>
<div class="t" style="left:0.5px;width:24px;text-align:center;top:317.34px;font-size:12px;color:#333;font-weight:400;">6</div>
<div class="t" style="left:0.5px;width:24px;text-align:center;top:337.34px;font-size:12px;color:#333;font-weight:400;">7</div>
<div class="t" style="left:0.5px;width:24px;text-align:center;top:356.34px;font-size:12px;color:#333;font-weight:400;">8</div>
<div class="t" style="left:0.5px;width:24px;text-align:center;top:376.34px;font-size:12px;color:#333;font-weight:400;">9</div>
<div class="t" style="left:0.5px;width:24px;text-align:center;top:395.34px;font-size:12px;color:#333;font-weight:400;">10</div>
<div class="t" style="left:0.5px;width:24px;text-align:center;top:415.34px;font-size:12px;color:#333;font-weight:400;">11</div>
<div class="t" style="left:0.5px;width:24px;text-align:center;top:434.34px;font-size:12px;color:#333;font-weight:400;">12</div>
<div class="t" style="left:0.5px;width:24px;text-align:center;top:453.34px;font-size:12px;color:#333;font-weight:400;">13</div>
<div class="t" style="left:0.5px;width:24px;text-align:center;top:473.34px;font-size:12px;color:#333;font-weight:400;">14</div>
<div class="t" style="left:0.5px;width:24px;text-align:center;top:492.34px;font-size:12px;color:#333;font-weight:400;">15</div>
<div class="t" style="left:0.5px;width:24px;text-align:center;top:512.34px;font-size:12px;color:#333;font-weight:400;">16</div>
<div class="t" style="left:0.5px;width:24px;text-align:center;top:531.34px;font-size:12px;color:#333;font-weight:400;">17</div>
<div class="t" style="left:0.5px;width:24px;text-align:center;top:551.34px;font-size:12px;color:#333;font-weight:400;">18</div>
<div class="t" style="left:0.5px;width:24px;text-align:center;top:570.34px;font-size:12px;color:#333;font-weight:400;">19</div>
<div class="t" style="left:0.5px;width:24px;text-align:center;top:589.34px;font-size:12px;color:#333;font-weight:400;">20</div>
<div class="t" style="left:0.5px;width:24px;text-align:center;top:609.34px;font-size:12px;color:#333;font-weight:400;">21</div>
<div class="t" style="left:0.5px;width:24px;text-align:center;top:628.34px;font-size:12px;color:#333;font-weight:400;">22</div>
<div class="t" style="left:0.5px;width:24px;text-align:center;top:648.34px;font-size:12px;color:#333;font-weight:400;">23</div>
<div class="t" style="left:28.57px;top:220.94px;font-size:12px;color:#222;font-weight:400;transform:scaleX(1.023);transform-origin:0 0;">01/11/2017 16:51</div>
<div class="r" style="left:23.5px;top:215px;width:104px;height:21px;background:transparent;border:2px solid #217346"></div>
<div class="r" style="left:123.5px;top:233px;width:5px;height:5px;background:#217346;"></div>
<div class="r" style="left:1238px;top:197px;width:16px;height:460px;background:#e6e6e6;"></div>
<div class="r" style="left:1240px;top:199px;width:14px;height:15px;background:#ffffff;border:1px solid #c6c6c6"></div>
<svg class="r" style="left:1243.5px;top:204px;" width="7" height="4" viewBox="0 0 7 4"><path d="M0 4H7L3.5 0Z" fill="#777"/></svg>
<div class="r" style="left:1240px;top:214px;width:14px;height:409px;background:#ffffff;border:1px solid #c6c6c6"></div>
<div class="r" style="left:1241px;top:623px;width:12px;height:21px;background:#dcdcdc;"></div>
<div class="r" style="left:1240px;top:644px;width:14px;height:13px;background:#ffffff;border:1px solid #c6c6c6"></div>
<svg class="r" style="left:1243.5px;top:649px;" width="7" height="4" viewBox="0 0 7 4"><path d="M0 0H7L3.5 4Z" fill="#777"/></svg>
<div class="r" style="left:1px;top:656px;width:1253px;height:28px;background:#e6e6e6;"></div>
<div class="r" style="left:1px;top:656px;width:1253px;height:1px;background:#b9b9b9;"></div>
<div class="r" style="left:1px;top:684px;width:1253px;height:1px;background:#c8c8c8;"></div>
<svg class="r" style="left:26px;top:666px;" width="5" height="8" viewBox="0 0 5 8"><path d="M4 0V8L0 4Z" fill="#c6c6c6"/></svg>
<svg class="r" style="left:52px;top:666px;" width="5" height="8" viewBox="0 0 5 8"><path d="M0 0V8L4 4Z" fill="#c6c6c6"/></svg>
<div class="r" style="left:93px;top:656px;width:56px;height:25px;background:#ffffff;border-left:1px solid #b9b9b9;border-right:1px solid #b9b9b9"></div>
<div class="r" style="left:93px;top:679px;width:56px;height:2px;background:#217346;"></div>
<div class="t" style="left:102.78px;top:664.14px;font-size:12px;color:#217346;font-weight:700;transform:scaleX(1.046);transform-origin:0 0;">Hoja1</div>
<div class="t" style="left:159.62px;top:664.14px;font-size:12px;color:#444;font-weight:400;transform:scaleX(1.019);transform-origin:0 0;">Hoja2</div>
<div class="r" style="left:204px;top:661px;width:1px;height:19px;background:#b0b0b0;"></div>
<div class="t" style="left:214.72px;top:664.14px;font-size:12px;color:#444;font-weight:400;transform:scaleX(1.024);transform-origin:0 0;">Hoja3</div>
<div class="r" style="left:258px;top:661px;width:1px;height:19px;background:#b0b0b0;"></div>
<svg class="r" style="left:288px;top:662px;" width="17" height="17" viewBox="0 0 17 17"><circle cx="8.5" cy="8.5" r="7.3" fill="none" stroke="#777" stroke-width="1.1"/><path d="M8.5 4.5V12.5M4.5 8.5H12.5" stroke="#666" stroke-width="1.4"/></svg>
<div class="r" style="left:754px;top:665.5px;width:2px;height:2px;background:#aaa;"></div>
<div class="r" style="left:754px;top:669.5px;width:2px;height:2px;background:#aaa;"></div>
<div class="r" style="left:754px;top:673.5px;width:2px;height:2px;background:#aaa;"></div>
<div class="r" style="left:770px;top:664px;width:14px;height:14px;background:#ffffff;border:1px solid #c6c6c6"></div>
<svg class="r" style="left:774px;top:667px;" width="5" height="8" viewBox="0 0 5 8"><path d="M4 0V8L0 4Z" fill="#777"/></svg>
<div class="r" style="left:783px;top:664px;width:414px;height:14px;background:#ffffff;border:1px solid #c6c6c6"></div>
<div class="r" style="left:1197px;top:665px;width:27px;height:12px;background:#dcdcdc;"></div>
<div class="r" style="left:1226px;top:664px;width:14px;height:14px;background:#ffffff;border:1px solid #c6c6c6"></div>
<svg class="r" style="left:1231px;top:667px;" width="5" height="8" viewBox="0 0 5 8"><path d="M0 0V8L4 4Z" fill="#777"/></svg>
<div class="r" style="left:1px;top:685px;width:1253px;height:19px;background:#f0f0f0;"></div>
<div class="t" style="left:8.02px;top:688.27px;font-size:11.5px;color:#555;font-weight:400;transform:scaleX(0.852);transform-origin:0 0;">Listo</div>
<svg class="r" style="left:73px;top:687px;" width="13" height="13" viewBox="0 0 13 13"><circle cx="3" cy="3" r="2.5" fill="#666"/><path d="M6 2.5H12.5V12.5H1V6.5" fill="none" stroke="#777"/><path d="M3.5 8V12M6 8V12M8.5 6V12M11 6V12" stroke="#999"/></svg>
<div class="r" style="left:989px;top:685px;width:34px;height:19px;background:#c6c6c6;"></div>
<svg class="r" style="left:999px;top:687px;" width="14" height="14" viewBox="0 0 14 14"><rect x="0.5" y="0.5" width="12" height="12" fill="none" stroke="#666"/><path d="M4.5 0.5V12.5M8.5 0.5V12.5M0.5 4.5H12.5M0.5 8.5H12.5" stroke="#666"/></svg>
<svg class="r" style="left:1034px;top:687px;" width="14" height="14" viewBox="0 0 14 14"><rect x="0.5" y="0.5" width="12" height="12" fill="none" stroke="#777"/><rect x="3" y="2.5" width="7" height="8" fill="none" stroke="#777"/><path d="M4.5 5H8.5M4.5 7H8.5" stroke="#999"/></svg>
<svg class="r" style="left:1069px;top:687px;" width="14" height="14" viewBox="0 0 14 14"><path d="M0.5 0.5H12.5V12.5H0.5ZM0.5 8.5H7.5V0.5M4 0.5V5" fill="none" stroke="#777"/></svg>
<div class="r" style="left:1097.5px;top:694px;width:6px;height:1.5px;background:#555;"></div>
<div class="r" style="left:1107px;top:694px;width:92px;height:1px;background:#aaa;"></div>
<div class="r" style="left:1151px;top:689px;width:4px;height:11px;background:#666;"></div>
<svg class="r" style="left:1202px;top:688px;" width="9" height="11" viewBox="0 0 9 11"><path d="M4.5 1V10M0 5.5H9" stroke="#555" stroke-width="1.5"/></svg>
<div class="t" style="left:1224.77px;top:687.97px;font-size:11.5px;color:#555;font-weight:400;transform:scaleX(0.848);transform-origin:0 0;">100%</div>
<div class="r" style="left:536px;top:72px;width:121px;height:24px;background:#ffffff;border:1px solid #ababab"></div>
<div class="r" style="left:644px;top:73px;width:12px;height:22px;background:#a6a6a6;"></div>
<svg class="r" style="left:648px;top:83px;" width="5" height="3" viewBox="0 0 5 3"><path d="M0 0H5L2.5 3Z" fill="#444"/></svg>
<div class="r" style="left:537px;top:95px;width:239px;height:456px;background:#fdfdfd;border:1px solid #c8c8c8;box-shadow:1px 2px 4px rgba(0,0,0,0.18)"></div>
<div class="r" style="left:538.5px;top:353.5px;width:220.5px;height:42px;background:#c6c6c6;"></div>
<div class="r" style="left:760px;top:99px;width:14px;height:15px;background:#ffffff;border:1px solid #c6c6c6"></div>
<svg class="r" style="left:763.5px;top:104px;" width="7" height="4" viewBox="0 0 7 4"><path d="M0 4H7L3.5 0Z" fill="#666"/></svg>
<div class="r" style="left:760px;top:114px;width:14px;height:358px;background:#ffffff;border:1px solid #c6c6c6"></div>
<div class="r" style="left:761px;top:472px;width:12px;height:35px;background:#ececec;"></div>
<div class="r" style="left:760px;top:507px;width:14px;height:15px;background:#ffffff;border:1px solid #c6c6c6"></div>
<svg class="r" style="left:763.5px;top:512px;" width="7" height="4" viewBox="0 0 7 4"><path d="M0 0H7L3.5 4Z" fill="#666"/></svg>
<div class="r" style="left:538px;top:524px;width:237px;height:1px;background:#e0e0e0;"></div>
<div class="t" style="left:566.81px;top:532.04px;font-size:12px;color:#4d4d4d;font-weight:400;transform:scaleX(0.927);transform-origin:0 0;">Más formatos de número...</div>
<div class="r" style="left:567.7px;top:543px;width:10px;height:1px;background:#555;"></div>
<div class="t" style="left:586.06px;top:104.44px;font-size:12px;color:#444;font-weight:700;transform:scaleX(0.917);transform-origin:0 0;">General</div>
<div class="t" style="left:585.80px;top:120.74px;font-size:12px;color:#666;font-weight:400;transform:scaleX(0.919);transform-origin:0 0;">Sin formato específico</div>
<div class="t" style="left:585.76px;top:147.16px;font-size:12px;color:#444;font-weight:700;transform:scaleX(0.947);transform-origin:0 0;">Número</div>
<div class="t" style="left:586.10px;top:163.46px;font-size:12px;color:#666;font-weight:400;transform:scaleX(0.834);transform-origin:0 0;">43040.70</div>
<div class="t" style="left:585.78px;top:189.88px;font-size:12px;color:#444;font-weight:700;transform:scaleX(0.923);transform-origin:0 0;">Moneda</div>
<div class="t" style="left:586.20px;top:206.18px;font-size:12px;color:#666;font-weight:400;transform:scaleX(0.830);transform-origin:0 0;">$43,040.70</div>
<div class="t" style="left:586.08px;top:232.60px;font-size:12px;color:#444;font-weight:700;transform:scaleX(0.870);transform-origin:0 0;">Contabilidad</div>
<div class="t" style="left:589.40px;top:248.90px;font-size:12px;color:#666;font-weight:400;transform:scaleX(0.823);transform-origin:0 0;">$43,040.70</div>
<div class="t" style="left:585.82px;top:275.32px;font-size:12px;color:#444;font-weight:700;transform:scaleX(0.873);transform-origin:0 0;">Fecha corta</div>
<div class="t" style="left:585.92px;top:291.62px;font-size:12px;color:#666;font-weight:400;transform:scaleX(0.916);transform-origin:0 0;">01/11/2017</div>
<div class="t" style="left:585.83px;top:318.04px;font-size:12px;color:#444;font-weight:700;transform:scaleX(0.862);transform-origin:0 0;">Fecha larga</div>
<div class="t" style="left:585.60px;top:334.34px;font-size:12px;color:#666;font-weight:400;transform:scaleX(0.897);transform-origin:0 0;">miércoles, 1 de noviembre de 2017</div>
<div class="t" style="left:585.77px;top:360.76px;font-size:12px;color:#262626;font-weight:700;transform:scaleX(0.938);transform-origin:0 0;">Hora</div>
<div class="t" style="left:585.93px;top:377.06px;font-size:12px;color:#3a3a3a;font-weight:400;transform:scaleX(0.884);transform-origin:0 0;">04:51:22 p. m.</div>
<div class="t" style="left:585.79px;top:403.48px;font-size:12px;color:#444;font-weight:700;transform:scaleX(0.914);transform-origin:0 0;">Porcentaje</div>
<div class="t" style="left:586.10px;top:419.78px;font-size:12px;color:#666;font-weight:400;transform:scaleX(0.844);transform-origin:0 0;">4304070.24%</div>
<div class="t" style="left:585.82px;top:446.20px;font-size:12px;color:#444;font-weight:700;transform:scaleX(0.873);transform-origin:0 0;">Fracción</div>
<div class="t" style="left:586.09px;top:462.50px;font-size:12px;color:#666;font-weight:400;transform:scaleX(0.878);transform-origin:0 0;">43040 5/7</div>
<div class="t" style="left:586.07px;top:488.92px;font-size:12px;color:#444;font-weight:700;transform:scaleX(0.895);transform-origin:0 0;">Científica</div>
<div class="t" style="left:586.10px;top:505.22px;font-size:12px;color:#666;font-weight:400;transform:scaleX(0.850);transform-origin:0 0;">4.30E+04</div>
<div class="t" style="left:546.50px;top:106.77px;font-size:11.5px;color:#555;font-weight:400;transform:scaleX(1.012);transform-origin:0 0;-webkit-text-stroke:0.2px #555">ABC</div>
<div class="t" style="left:544.84px;top:117.55px;font-size:14px;color:#555;font-weight:400;transform:scaleX(1.106);transform-origin:0 0;-webkit-text-stroke:0.2px #555">123</div>
<div class="t" style="left:543.66px;top:148.57px;font-size:26.5px;color:#555;font-weight:400;transform:scaleX(0.976);transform-origin:0 0;">12</div>
<svg class="r" style="left:545px;top:189px;" width="28" height="29" viewBox="0 0 28 29"><rect x="0.5" y="1" width="25.5" height="15.5" fill="#3a7bc8"/><path d="M3.5 4H23V13.5H3.5Q5 8.75 3.5 4Z" fill="#fff"/><circle cx="11.5" cy="8.8" r="3.3" fill="#3a7bc8"/><ellipse cx="20" cy="19" rx="6.5" ry="2.2" fill="#e8c17a" stroke="#fff" stroke-width="0.8"/><ellipse cx="20" cy="16" rx="6.5" ry="2.2" fill="#e8c17a" stroke="#fff" stroke-width="0.8"/><ellipse cx="20" cy="13" rx="6.5" ry="2.2" fill="#e8c17a" stroke="#fff" stroke-width="0.8"/><ellipse cx="11.5" cy="25.5" rx="6.5" ry="2.2" fill="#e8c17a" stroke="#fff" stroke-width="0.8"/><ellipse cx="11.5" cy="22.5" rx="6.5" ry="2.2" fill="#e8c17a" stroke="#fff" stroke-width="0.8"/><ellipse cx="11.5" cy="19.5" rx="6.5" ry="2.2" fill="#e8c17a" stroke="#fff" stroke-width="0.8"/></svg>
<svg class="r" style="left:549px;top:232px;" width="25" height="31" viewBox="0 0 25 31"><rect x="0.7" y="1" width="17.5" height="27" rx="1.5" fill="#fff" stroke="#777" stroke-width="1.2"/><rect x="3" y="3.5" width="13" height="3.2" fill="#3a7bc8"/><g fill="#777"><rect x="3" y="9" width="3" height="2.2"/><rect x="8" y="9" width="3" height="2.2"/><rect x="13" y="9" width="3" height="2.2"/><rect x="3" y="13" width="3" height="2.2"/><rect x="8" y="13" width="3" height="2.2"/><rect x="13" y="13" width="3" height="2.2"/><rect x="3" y="17" width="3" height="2.2"/><rect x="8" y="17" width="3" height="2.2"/><rect x="3" y="21" width="3" height="2.2"/><rect x="8" y="21" width="3" height="2.2"/></g><g fill="#e8c17a" stroke="#fff" stroke-width="0.6"><ellipse cx="19.5" cy="23" rx="4.5" ry="1.6"/><ellipse cx="19.5" cy="20.5" rx="4.5" ry="1.6"/><ellipse cx="19.5" cy="18" rx="4.5" ry="1.6"/><ellipse cx="14" cy="28.5" rx="4.5" ry="1.6"/><ellipse cx="14" cy="26" rx="4.5" ry="1.6"/><ellipse cx="14" cy="23.5" rx="4.5" ry="1.6"/></g></svg>
<svg class="r" style="left:546px;top:277px;" width="25" height="25" viewBox="0 0 25 25"><rect x="0.5" y="0.5" width="23" height="23" fill="#fff" stroke="#777"/><rect x="0.5" y="0.5" width="23" height="3.5" fill="#777"/><g stroke="#888" stroke-width="1"><path d="M5 4V23.5M9.5 4V23.5M14 4V23.5M18.5 4V23.5M0.5 8.5H23.5M0.5 13.5H23.5M0.5 18.5H23.5"/></g><rect x="14" y="8.5" width="5" height="5" fill="#3a7bc8"/></svg>
<svg class="r" style="left:546px;top:320px;" width="25" height="25" viewBox="0 0 25 25"><rect x="0.5" y="0.5" width="23" height="23" fill="#fff" stroke="#777"/><rect x="0.5" y="0.5" width="23" height="3.5" fill="#777"/><g stroke="#888" stroke-width="1"><path d="M5 4V23.5M9.5 4V23.5M14 4V23.5M18.5 4V23.5M0.5 8.5H23.5M0.5 13.5H23.5M0.5 18.5H23.5"/></g><rect x="14" y="8.5" width="5" height="5" fill="#3a7bc8"/></svg>
<svg class="r" style="left:544px;top:360px;" width="29" height="29" viewBox="0 0 29 29"><circle cx="14.5" cy="14.5" r="12.8" fill="#fff" stroke="#5b88c0" stroke-width="1.6"/><path d="M15 7.5V17.5H21.5" fill="none" stroke="#444" stroke-width="1.5"/></svg>
<div class="t" style="left:545.32px;top:402.96px;font-size:31px;color:#5a5a5a;font-weight:400;transform:scaleX(0.905);transform-origin:0 0;">%</div>
<svg class="r" style="left:544px;top:446px;" width="30" height="30" viewBox="0 0 30 30"><text x="1.8" y="16" font-family="Liberation Sans" font-size="19" fill="#555" transform="scale(0.92,1)">1</text><path d="M5 27L22.5 3" stroke="#555" stroke-width="2"/><text x="15" y="26.6" font-family="Liberation Sans" font-size="19" fill="#555" transform="scale(0.92,1)" style="-webkit-text-stroke:0.3px #555">2</text></svg>
<div class="t" style="left:545.60px;top:496.91px;font-size:17px;color:#555;font-weight:400;transform:scaleX(1.018);transform-origin:0 0;-webkit-text-stroke:0.2px #555">10</div>
<div class="t" style="left:565.84px;top:492.84px;font-size:10px;color:#555;font-weight:400;transform:scaleX(0.913);transform-origin:0 0;">2</div>
<svg class="r" style="left:616px;top:375px;" width="14" height="20" viewBox="0 0 14 20"><path d="M1 1V15L4.5 11.5L7 17.5L9.5 16.5L7 10.5H12Z" fill="#fff" stroke="#000" stroke-width="1"/></svg>
<svg class="r" style="left:1005px;top:545px;opacity:0.85" width="190" height="80" viewBox="0 0 190 80"><defs><linearGradient id="gg" gradientUnits="userSpaceOnUse" x1="0" y1="6" x2="0" y2="57"><stop offset="0" stop-color="#55c455"/><stop offset="0.5" stop-color="#a6e77f"/><stop offset="1" stop-color="#dcf8b8"/></linearGradient><radialGradient id="sc" cx="0.5" cy="0.5" r="0.6"><stop offset="0" stop-color="#c4ecf9"/><stop offset="0.6" stop-color="#98d0f0"/><stop offset="1" stop-color="#5c9fd9"/></radialGradient></defs><path d="M21.30 8.50Q9.30 32 21.30 55.50" fill="none" stroke="url(#gg)" stroke-width="6.8"/><path d="M166.30 8.50Q178.30 32 166.30 55.50" fill="none" stroke="url(#gg)" stroke-width="6.8"/><path d="M32.34 12.50Q22.26 32 32.34 51.50" fill="none" stroke="url(#gg)" stroke-width="6.6"/><path d="M155.26 12.50Q165.34 32 155.26 51.50" fill="none" stroke="url(#gg)" stroke-width="6.6"/><path d="M42.64 17.50Q34.96 32 42.64 46.50" fill="none" stroke="url(#gg)" stroke-width="6.4"/><path d="M144.96 17.50Q152.64 32 144.96 46.50" fill="none" stroke="url(#gg)" stroke-width="6.4"/><path d="M52.52 23.00Q47.48 32 52.52 41.00" fill="none" stroke="url(#gg)" stroke-width="6"/><path d="M135.08 23.00Q140.12 32 135.08 41.00" fill="none" stroke="url(#gg)" stroke-width="6"/><path d="M63.23 27.00Q58.67 32 63.23 37.00" fill="none" stroke="url(#gg)" stroke-width="5.5"/><path d="M124.37 27.00Q128.92 32 124.37 37.00" fill="none" stroke="url(#gg)" stroke-width="5.5"/><rect x="69.40000000000009" y="10" width="49.7" height="39" rx="3" fill="#929292"/><rect x="71.20000000000005" y="13.299999999999955" width="46.3" height="32.5" fill="url(#sc)"/><path d="M89 49H100L102 54H87Z" fill="#e8e8e8" stroke="#aaa" stroke-width="0.8"/><rect x="79.70000000000005" y="55.5" width="29.3" height="3" fill="#999"/><rect x="69" y="59" width="48" height="11" rx="2" fill="#c9c9c9"/><rect x="69" y="67" width="48" height="3.3" rx="1.5" fill="#9a9a9a"/></svg>
<div class="t" style="left:1012.21px;top:616.69px;font-size:43.6px;color:#7288a8;font-weight:700;transform:scaleX(0.386);transform-origin:0 0;opacity:0.86;-webkit-text-stroke:1.2px #7288a8">EXPERTO</div>
<div class="t" style="left:1095.85px;top:619.74px;font-size:40px;color:#ffffff;font-weight:400;transform:scaleX(0.467);transform-origin:0 0;text-shadow:0 5px 5px rgba(0,0,0,0.55),0 9px 9px rgba(0,0,0,0.45)">digital</div>
<div class="t" style="left:1147.37px;top:616.69px;font-size:43.6px;color:#6d7f98;font-weight:700;transform:scaleX(0.398);transform-origin:0 0;opacity:0.86;-webkit-text-stroke:1.2px #6d7f98">.NET</div>
<div class="r" style="left:0px;top:0px;width:1px;height:704px;background:#1c1c1c;"></div>
<div class="r" style="left:1254px;top:0px;width:1px;height:704px;background:#1c1c1c;"></div>
</body></html>
